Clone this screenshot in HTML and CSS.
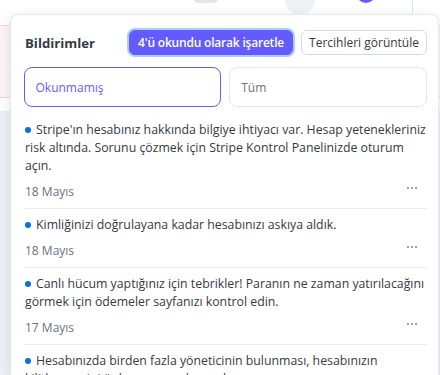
FILE: index.html
```html
<!DOCTYPE html>
<html lang="tr">
<head>
  <meta charset="UTF-8" />
  <meta name="viewport" content="width=device-width, initial-scale=1.0"/>
  <title>Bildirimler</title>
  <link rel="stylesheet" href="styles.css">
</head>
<body>
  <div class="page">
    <div class="topbar">
      <span class="toggle"></span>
      <span class="circle"></span>
      <span class="avatar"></span>
      <span class="divider-v"></span>
    </div>
    <div class="banner"></div>
    <div class="content"></div>
  </div>

  <div class="panel">
    <div class="panel-head">
      <div class="title">Bildirimler</div>
      <div class="actions">
        <button class="btn btn-primary">4'ü okundu olarak işaretle</button>
        <button class="btn">Tercihleri görüntüle</button>
      </div>
    </div>

    <div class="tabs">
      <div class="tab active">Okunmamış</div>
      <div class="tab">Tüm</div>
    </div>

    <div class="list">
      <div class="item">
        <p class="text"><span class="dot"></span>Stripe'ın hesabınız hakkında bilgiye ihtiyacı var. Hesap yetenekleriniz risk altında. Sorunu çözmek için Stripe Kontrol Panelinizde oturum açın.</p>
        <div class="meta">
          <span class="date">18 Mayıs</span>
          <svg class="more" width="10" height="4" viewBox="0 0 10 4"><circle cx="1" cy="2" r="0.9"/><circle cx="5" cy="2" r="0.9"/><circle cx="9" cy="2" r="0.9"/></svg>
        </div>
      </div>
      <div class="item">
        <p class="text"><span class="dot"></span>Kimliğinizi doğrulayana kadar hesabınızı askıya aldık.</p>
        <div class="meta">
          <span class="date">18 Mayıs</span>
          <svg class="more" width="10" height="4" viewBox="0 0 10 4"><circle cx="1" cy="2" r="0.9"/><circle cx="5" cy="2" r="0.9"/><circle cx="9" cy="2" r="0.9"/></svg>
        </div>
      </div>
      <div class="item">
        <p class="text"><span class="dot"></span>Canlı hücum yaptığınız için tebrikler! Paranın ne zaman yatırılacağını görmek için ödemeler sayfanızı kontrol edin.</p>
        <div class="meta">
          <span class="date">17 Mayıs</span>
          <svg class="more" width="10" height="4" viewBox="0 0 10 4"><circle cx="1" cy="2" r="0.9"/><circle cx="5" cy="2" r="0.9"/><circle cx="9" cy="2" r="0.9"/></svg>
        </div>
      </div>
      <div class="item">
        <p class="text"><span class="dot"></span>Hesabınızda birden fazla yöneticinin bulunması, hesabınızın kilitlenmesini önlemeye yardımcı olur.</p>
      </div>
    </div>
  </div>
</body>
</html>
```

FILE: styles.css
```css
body {
  margin: 0;
  width: 440px;
  height: 375px;
  overflow: hidden;
  font-family: "Open Sans", "Noto Sans", sans-serif;
  background-color: #fff;
  position: relative;
}

/* page behind the popover */
.topbar {
  height: 25px;
  display: flex;
  align-items: flex-start;
  background-color: #fff;
}

.toggle {
  width: 26px;
  height: 12px;
  margin-top: -9px;
  margin-left: 193px;
  border-radius: 6px;
  background-color: #e3e5e8;
}

.circle {
  width: 30px;
  height: 30px;
  margin-top: -15px;
  margin-left: 66px;
  border-radius: 50%;
  background-color: #f0f1f4;
}

.avatar {
  width: 20px;
  height: 20px;
  margin-top: -17px;
  margin-left: 41px;
  border-radius: 50%;
  background-color: #635bff;
}

.divider-v {
  width: 1px;
  height: 25px;
  margin-left: 36px;
  background-color: #e3e8ee;
}

.banner {
  height: 71px;
  background-color: #fdf4f6;
  border-top: 1px solid #f6d4dc;
  border-bottom: 1px solid #f6d4dc;
}

.content {
  margin-top: 13px;
  height: 300px;
  background-color: #eff0f3;
}

/* popover */
.panel {
  position: absolute;
  top: 14px;
  left: 10px;
  width: 429px;
  height: 361px;
  overflow: hidden;
  box-sizing: border-box;
  padding: 0 11px 0 13px;
  background-color: #fff;
  border: 1px solid #e3e8ee;
  border-bottom: none;
  border-radius: 8px 8px 0 0;
  box-shadow: 0 4px 14px rgba(40, 50, 70, 0.12);
  color: #353a44;
}

.panel-head {
  display: flex;
  align-items: center;
  justify-content: space-between;
  margin-top: 14px;
  height: 27px;
}

.title {
  font-size: 13.2px;
  font-weight: 700;
  padding-left: 1px;
}

.actions {
  display: flex;
  gap: 8px;
}

.btn {
  height: 25px;
  padding: 0 7px;
  font-family: inherit;
  font-size: 12px;
  color: #353a44;
  background-color: #fff;
  border: 1px solid #d5dbe1;
  border-radius: 6px;
}

.btn-primary {
  padding: 0 8px;
  color: #fff;
  font-weight: 600;
  letter-spacing: -0.2px;
  background-color: #635bff;
  border-color: #635bff;
  box-shadow: 0 0 0 2px #a9cff7;
}

.tabs {
  display: flex;
  gap: 8px;
  margin-top: 11px;
}

.tab {
  flex: 1;
  height: 40px;
  box-sizing: border-box;
  display: flex;
  align-items: center;
  padding-left: 11px;
  font-size: 12px;
  color: #687385;
  border: 1px solid #e3e8ee;
  border-radius: 8px;
}

.tab.active {
  padding-left: 10.5px;
  color: #635bff;
  border: 1.5px solid #635bff;
}

.list {
  margin-top: 7px;
}

.item {
  padding: 7px 0 9px 1px;
  border-bottom: 1px solid #ebeef1;
}

.text {
  margin: 0;
  font-size: 12.3px;
  line-height: 18px;
}

.dot {
  display: inline-block;
  width: 6px;
  height: 6px;
  margin-right: 5px;
  border-radius: 50%;
  background-color: #0570de;
  vertical-align: 1px;
}

.meta {
  display: flex;
  align-items: center;
  justify-content: space-between;
  margin-top: 8px;
  height: 16px;
}

.date {
  font-size: 12px;
  color: #687385;
}

.more {
  fill: #687385;
  margin-right: 10px;
  margin-top: -6px;
}
```
